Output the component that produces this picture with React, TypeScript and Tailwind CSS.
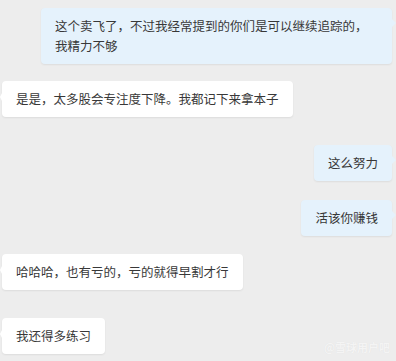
import React from 'react';

type Msg = { text: string; mine: boolean; mt: string };

const messages: Msg[] = [
  { text: '这个卖飞了，不过我经常提到的你们是可以继续追踪的，我精力不够', mine: true, mt: 'mt-[8px]' },
  { text: '是是，太多股会专注度下降。我都记下来拿本子', mine: false, mt: 'mt-[17px]' },
  { text: '这么努力', mine: true, mt: 'mt-[28px]' },
  { text: '活该你赚钱', mine: true, mt: 'mt-[19px]' },
  { text: '哈哈哈，也有亏的，亏的就得早割才行', mine: false, mt: 'mt-[18px]' },
  { text: '我还得多练习', mine: false, mt: 'mt-[28px]' },
];

const Bubble = ({ msg }: { msg: Msg }) => {
  return (
    <div className={`flex ${msg.mine ? 'justify-end pr-[4px]' : 'justify-start pl-[2px]'} ${msg.mt}`}>
      <div
        className={`relative max-w-[351px] rounded-[4px] px-[14px] py-[8px] text-[12.5px] leading-[20px] text-[#383838] shadow-[0_1px_2px_rgba(0,0,0,0.07)] ${
          msg.mine ? 'bg-[#e5f2fc]' : 'bg-white'
        }`}
      >
        {msg.text}
        {msg.mine ? (
          <span className="absolute right-[-4px] top-[11px] h-0 w-0 border-y-[4px] border-l-[4px] border-y-transparent border-l-[#e5f2fc]" />
        ) : (
          <span className="absolute left-[-2px] top-[12px] h-0 w-0 border-y-[4px] border-r-[2px] border-y-transparent border-r-white" />
        )}
      </div>
    </div>
  );
};

export default function App() {
  return (
    <div
      className="relative h-[361px] w-[396px] overflow-hidden bg-[#ededed]"
      style={{ fontFamily: '"Noto Sans CJK SC", "Microsoft YaHei", sans-serif' }}
    >
      {messages.map((m, i) => (
        <Bubble key={i} msg={m} />
      ))}
      <div className="absolute bottom-[8px] right-[6px] text-[11px] font-bold leading-none text-[#f4f4f4] [text-shadow:0_0_1px_rgba(0,0,0,0.06)]">
        @雪球用户吧
      </div>
    </div>
  );
}
